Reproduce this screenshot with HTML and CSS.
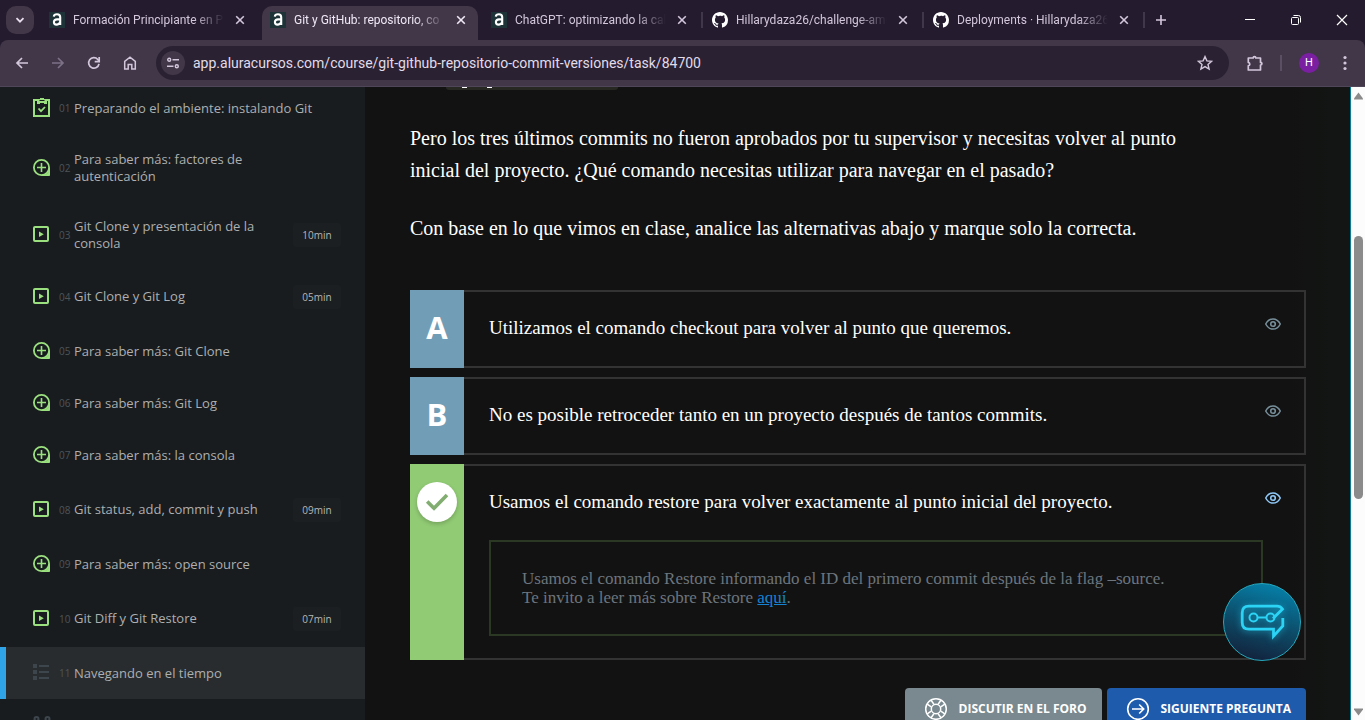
FILE: index.html
```html
<!DOCTYPE html>
<html lang="es">
<head>
<meta charset="utf-8">
<title>Git y GitHub: repositorio, commit y versiones</title>
<link rel="stylesheet" href="styles.css">
</head>
<body>
<svg class="sprite" aria-hidden="true">
  <symbol id="alura" viewBox="0 0 16 16"><rect width="16" height="16" fill="#1d3338"/><path d="M4.800 4.600C5 2.900 6.400 2.200 8 2.200c2 0 3.200 1 3.200 3V13M11 7.400H8C6 7.400 4.900 8.500 4.900 10s1 2.600 2.600 2.600S11 11.500 11 9.800" fill="none" stroke="#fff" stroke-width="2.100"/></symbol>
  <symbol id="github" viewBox="0 0 16 16"><path fill="#fff" d="M8 0C3.580 0 0 3.580 0 8c0 3.540 2.290 6.530 5.470 7.590.4.070.55-.17.55-.38 0-.19-.01-.82-.01-1.490-2.010.37-2.530-.49-2.690-.94-.09-.23-.48-.94-.82-1.130-.28-.15-.68-.52-.01-.53.63-.01 1.080.58 1.230.82.72 1.210 1.870.87 2.330.66.070-.52.28-.87.51-1.070-1.780-.2-3.640-.89-3.640-3.950 0-.87.31-1.590.82-2.150-.08-.2-.36-1.020.08-2.120 0 0 .67-.21 2.200.82A7.600 7.600 0 0 1 8 3.860c.68 0 1.360.09 2 .27 1.530-1.040 2.200-.82 2.200-.82.44 1.100.16 1.920.08 2.120.51.56.82 1.270.82 2.150 0 3.070-1.870 3.750-3.650 3.950.29.25.54.73.54 1.480 0 1.070-.01 1.930-.01 2.200 0 .21.15.46.55.38A8 8 0 0 0 16 8c0-4.420-3.580-8-8-8z"/></symbol>
  <symbol id="x" viewBox="0 0 10 10"><path d="M1.200 1.200l7.600 7.600M8.800 1.200L1.200 8.800" stroke="currentColor" stroke-width="1.600" fill="none"/></symbol>
  <symbol id="clip" viewBox="0 0 18 20"><path d="M1 2h15v16H1z" fill="none" stroke="currentColor" stroke-width="2"/><path d="M4 1h3V0h4v1h3v5h-3V5H7v1H4z" fill="currentColor"/><path d="M6.500 2.500h5" stroke="#181c1f"/><path d="M5.500 10.500l2.500 2.700 4-4.200" fill="none" stroke="currentColor" stroke-width="1.800"/></symbol>
  <symbol id="plus" viewBox="0 0 18 18"><circle cx="8.500" cy="8.500" r="7.600" fill="none" stroke="currentColor" stroke-width="1.800"/><path d="M8.500 4v9M4 8.500h9" stroke="currentColor" stroke-width="1.600"/><path d="M16.500 9v7.500H9c4.500 0 7.500-3.500 7.500-7.500z" fill="currentColor" stroke="currentColor"/></symbol>
  <symbol id="play" viewBox="0 0 18 18"><rect x="1" y="1" width="14" height="14" rx="1" fill="none" stroke="currentColor" stroke-width="2"/><path d="M6 5.500v5.500l4.800-2.700z" fill="currentColor"/></symbol>
  <symbol id="list" viewBox="0 0 18 18"><path d="M0 0h4v4H0zM0 6h4v4H0zM0 12h4v4H0zM6 1h10v2H6zM6 7h10v2H6zM6 13h10v2H6z" fill="currentColor"/></symbol>
  <symbol id="branch" viewBox="0 0 18 18"><path d="M3.500 5v5c0 3 11 3 11 0V5M9 12v5" fill="none" stroke="currentColor" stroke-width="2"/><circle cx="3.500" cy="3" r="2" fill="none" stroke="currentColor" stroke-width="2"/><circle cx="14.500" cy="3" r="2" fill="none" stroke="currentColor" stroke-width="2"/></symbol>
  <symbol id="eye" viewBox="0 0 16 12"><path d="M.7 6C2.500 2.500 5 .9 8 .9S13.500 2.500 15.300 6C13.500 9.500 11 11.100 8 11.100S2.500 9.500.7 6z" fill="none" stroke="currentColor" stroke-width="1.500"/><circle cx="8" cy="6" r="2.300" fill="none" stroke="currentColor" stroke-width="1.600"/></symbol>
</svg>

<header class="browser">
  <div class="tabstrip">
    <button class="tab-search" aria-label="Buscar pestañas"><svg width="10" height="10" viewBox="0 0 10 10"><path d="M1.500 3.200L5 6.700l3.500-3.500" fill="none" stroke="currentColor" stroke-width="1.800"/></svg></button>
    <nav class="tabs" aria-label="Pestañas">
      <div class="tab"><svg class="favicon"><use href="#alura"/></svg><span class="tab-title">Formación Principiante en P</span><button class="tab-close" aria-label="Cerrar"><svg><use href="#x"/></svg></button></div>
      <div class="tab active"><svg class="favicon"><use href="#alura"/></svg><span class="tab-title">Git y GitHub: repositorio, co</span><button class="tab-close" aria-label="Cerrar"><svg><use href="#x"/></svg></button></div>
      <div class="tab divided"><svg class="favicon"><use href="#alura"/></svg><span class="tab-title">ChatGPT: optimizando la cali</span><button class="tab-close" aria-label="Cerrar"><svg><use href="#x"/></svg></button></div>
      <div class="tab divided"><svg class="favicon"><use href="#github"/></svg><span class="tab-title">Hillarydaza26/challenge-ami</span><button class="tab-close" aria-label="Cerrar"><svg><use href="#x"/></svg></button></div>
      <div class="tab divided"><svg class="favicon"><use href="#github"/></svg><span class="tab-title">Deployments · Hillarydaza26</span><button class="tab-close" aria-label="Cerrar"><svg><use href="#x"/></svg></button></div>
    </nav>
    <button class="new-tab" aria-label="Nueva pestaña"><svg width="12" height="12" viewBox="0 0 12 12"><path d="M6 1v10M1 6h10" stroke="currentColor" stroke-width="1.600"/></svg></button>
    <div class="window-controls">
      <button aria-label="Minimizar"><svg width="12" height="12" viewBox="0 0 12 12"><path d="M1 5.500h10" stroke="currentColor"/></svg></button>
      <button aria-label="Restaurar"><svg width="12" height="12" viewBox="0 0 12 12"><rect x="1.500" y="3.500" width="7" height="7" rx="1" fill="none" stroke="currentColor"/><path d="M3.500 1.500h5a2 2 0 0 1 2 2v5" fill="none" stroke="currentColor"/></svg></button>
      <button aria-label="Cerrar ventana"><svg width="12" height="12" viewBox="0 0 12 12"><path d="M1 1l10 10M11 1L1 11" stroke="currentColor" stroke-width="1.200"/></svg></button>
    </div>
  </div>
  <div class="toolbar">
    <div class="nav-buttons">
      <button aria-label="Atrás"><svg viewBox="0 0 16 16"><path d="M14 8H3M8 3L3 8l5 5" fill="none" stroke="currentColor" stroke-width="1.700"/></svg></button>
      <button class="disabled" aria-label="Adelante" disabled><svg viewBox="0 0 16 16"><path d="M2 8h11M8 3l5 5-5 5" fill="none" stroke="currentColor" stroke-width="1.700"/></svg></button>
      <button aria-label="Recargar"><svg viewBox="0 0 16 16"><path d="M13 8.800A5.200 5.200 0 1 1 11.800 4.500L13 6" fill="none" stroke="currentColor" stroke-width="1.700"/><path d="M13.200 2v4.600H8.700" fill="none" stroke="currentColor" stroke-width="1.700"/></svg></button>
      <button aria-label="Inicio"><svg viewBox="0 0 16 16"><path d="M2.700 14V6.300L8 2.200l5.300 4.100V14H9.800V9.400H6.200V14z" fill="none" stroke="currentColor" stroke-width="1.500"/></svg></button>
    </div>
    <div class="address">
      <button class="site-info" aria-label="Información del sitio"><svg width="12" height="12" viewBox="0 0 12 12"><g fill="none" stroke="currentColor" stroke-width="1.400"><circle cx="2.200" cy="2.700" r="1.500"/><path d="M5.500 2.700H12M0 9.300h6.500"/><circle cx="9.800" cy="9.300" r="1.500"/></g></svg></button>
      <label class="hidden" for="url">Dirección</label>
      <input id="url" class="url" type="text" value="app.aluracursos.com/course/git-github-repositorio-commit-versiones/task/84700">
      <button class="star" aria-label="Marcador"><svg width="16" height="16" viewBox="0 0 16 16"><path d="M8 1.600l1.900 4.300 4.700.4-3.600 3.100 1.100 4.600L8 11.600 3.900 14 5 9.400 1.400 6.300l4.700-.4z" fill="none" stroke="currentColor" stroke-width="1.400"/></svg></button>
    </div>
    <div class="toolbar-end">
      <button aria-label="Extensiones"><svg width="17" height="17" viewBox="0 0 17 17"><path d="M1.300 3h4.900c0-1.900 2.600-1.900 2.600 0h4.700v4.400c1.900 0 1.900 2.600 0 2.600v5H1.300v-4.200c2-.5 2-2.800 0-3.400z" fill="none" stroke="currentColor" stroke-width="1.700" stroke-linejoin="round"/></svg></button>
      <span class="divider"></span>
      <button class="avatar" aria-label="Perfil">H</button>
      <button aria-label="Menú"><svg width="4" height="16" viewBox="0 0 4 16"><g fill="currentColor"><circle cx="2" cy="2.500" r="1.600"/><circle cx="2" cy="8" r="1.600"/><circle cx="2" cy="13.500" r="1.600"/></g></svg></button>
    </div>
  </div>
</header>

<div class="page">
  <aside class="sidebar">
    <ol class="tasks">
      <li><a class="task done" href="#"><svg class="clip"><use href="#clip"/></svg><span class="num">01</span><span class="name">Preparando el ambiente: instalando Git</span></a></li>
      <li><a class="task done tall" href="#"><svg><use href="#plus"/></svg><span class="num">02</span><span class="name">Para saber más: factores de autenticación</span></a></li>
      <li><a class="task done tall" href="#"><svg><use href="#play"/></svg><span class="num">03</span><span class="name">Git Clone y presentación de la consola</span><span class="time">10min</span></a></li>
      <li><a class="task done timed" href="#"><svg><use href="#play"/></svg><span class="num">04</span><span class="name">Git Clone y Git Log</span><span class="time">05min</span></a></li>
      <li><a class="task done" href="#"><svg><use href="#plus"/></svg><span class="num">05</span><span class="name">Para saber más: Git Clone</span></a></li>
      <li><a class="task done" href="#"><svg><use href="#plus"/></svg><span class="num">06</span><span class="name">Para saber más: Git Log</span></a></li>
      <li><a class="task done" href="#"><svg><use href="#plus"/></svg><span class="num">07</span><span class="name">Para saber más: la consola</span></a></li>
      <li><a class="task done timed" href="#"><svg><use href="#play"/></svg><span class="num">08</span><span class="name">Git status, add, commit y push</span><span class="time">09min</span></a></li>
      <li><a class="task done" href="#"><svg><use href="#plus"/></svg><span class="num">09</span><span class="name">Para saber más: open source</span></a></li>
      <li><a class="task done timed" href="#"><svg><use href="#play"/></svg><span class="num">10</span><span class="name">Git Diff y Git Restore</span><span class="time">07min</span></a></li>
      <li><a class="task current" href="#"><svg><use href="#list"/></svg><span class="num">11</span><span class="name">Navegando en el tiempo</span></a></li>
      <li><a class="task" href="#"><svg><use href="#branch"/></svg></a></li>
    </ol>
  </aside>

  <main class="content">
    <div class="code-end"><i></i><i></i></div>
    <div class="statement">
      <p>Pero los tres últimos commits no fueron aprobados por tu supervisor y necesitas volver al punto<br>inicial del proyecto. ¿Qué comando necesitas utilizar para navegar en el pasado?</p>
      <p>Con base en lo que vimos en clase, analice las alternativas abajo y marque solo la correcta.</p>
    </div>
    <div class="options">
      <div class="option">
        <input class="hidden" type="radio" name="answer" id="a"><label class="letter" for="a">A</label>
        <div class="option-body"><label class="option-text" for="a">Utilizamos el comando checkout para volver al punto que queremos.</label></div>
        <button class="eye" aria-label="Ver opinión"><svg><use href="#eye"/></svg></button>
      </div>
      <div class="option">
        <input class="hidden" type="radio" name="answer" id="b"><label class="letter" for="b">B</label>
        <div class="option-body"><label class="option-text" for="b">No es posible retroceder tanto en un proyecto después de tantos commits.</label></div>
        <button class="eye" aria-label="Ver opinión"><svg><use href="#eye"/></svg></button>
      </div>
      <div class="option">
        <input class="hidden" type="radio" name="answer" id="c" checked><label class="letter correct" for="c" aria-label="C"><span class="check"><svg width="24" height="24" viewBox="0 0 24 24"><path d="M2.200 11.500l6.800 6.800L22 5" fill="none" stroke="#82ad70" stroke-width="3.600"/></svg></span></label>
        <div class="option-body">
          <label class="option-text" for="c">Usamos el comando restore para volver exactamente al punto inicial del proyecto.</label>
          <p class="opinion">Usamos el comando Restore informando el ID del primero commit después de la flag –source.<br>Te invito a leer más sobre Restore <a href="#">aquí</a>.</p>
        </div>
        <button class="eye open" aria-label="Ocultar opinión"><svg><use href="#eye"/></svg></button>
      </div>
    </div>
    <div class="actions">
      <button class="action forum"><svg viewBox="0 0 24 24"><g fill="none" stroke="currentColor" stroke-width="1.500"><circle cx="12" cy="12" r="10.300"/><circle cx="12" cy="12" r="4.700"/><path d="M7.200 9.900L3.200 7.100M9.900 7.200L7.100 3.200M14.100 7.200l2.800-4M16.800 9.900l4-2.800M16.800 14.100l4 2.800M14.100 16.800l2.800 4M9.900 16.800l-2.800 4M7.200 14.100l-4 2.800"/></g></svg>DISCUTIR EN EL FORO</button>
      <button class="action next"><svg viewBox="0 0 24 24"><g fill="none" stroke="currentColor" stroke-width="1.600"><circle cx="12" cy="12" r="10.300"/><path d="M6 12h11.500M13.200 7.500l4.500 4.500-4.500 4.500"/></g></svg>SIGUIENTE PREGUNTA</button>
    </div>
    <button class="chat" aria-label="Asistente"><svg width="46" height="36" viewBox="0 0 46 36"><g fill="none" stroke="#2bd3f5" stroke-width="2.800"><path d="M34 14.500l9.500-9.500c-1.500-2-3-2.800-5.500-2.800H10C5.500 2.200 3.200 4.500 3.200 9v9.500c0 4.500 2.300 6.700 6.800 6.700h24.500v7l9.300-10.200v-8"/><circle cx="14.500" cy="13.500" r="4" stroke-width="2"/><circle cx="31.500" cy="13.500" r="4" stroke-width="2"/><path d="M18.500 13.500h9" stroke-width="2"/></g></svg></button>
  </main>

  <div class="scrollbar" aria-hidden="true">
    <svg viewBox="0 0 9 8"><path d="M4.500.5L9 6.500v1H0v-1z" fill="#8b8b8b"/></svg>
    <span class="thumb"></span>
    <svg viewBox="0 0 9 8"><path d="M0 .5h9v1l-4.500 6L0 1.500z" fill="#8b8b8b"/></svg>
  </div>
</div>
</body>
</html>
```
FILE: styles.css
```css
* { box-sizing: border-box; }
body {
  margin: 0;
  height: 100vh;
  display: flex;
  flex-direction: column;
  overflow: hidden;
  background: #121212;
  color: #fff;
  font-family: "Open Sans", sans-serif;
}
button {
  border: 0;
  padding: 0;
  background: none;
  color: inherit;
  font-family: inherit;
  display: flex;
  align-items: center;
  justify-content: center;
}
.sprite { display: none; }
.hidden {
  position: absolute;
  width: 1px;
  height: 1px;
  margin: 0;
  opacity: 0;
  overflow: hidden;
}

/* Browser chrome */
.browser { position: relative; z-index: 0; flex: none; background: #241b2e; }
.tabstrip { display: flex; align-items: center; height: 40px; padding-left: 6px; color: #d3c7dc; }
.tab-search { width: 28px; height: 28px; border-radius: 10px; background: #413749; color: #e8def0; }
.tabs { display: flex; align-self: stretch; padding: 6px 0 0 7px; }
.tab {
  position: relative;
  display: flex;
  align-items: center;
  width: 221px;
  height: 34px;
  padding: 0 17px 6px 8px;
}
.favicon { width: 16px; height: 16px; margin-right: 8px; }
.tab-title {
  flex: 1;
  overflow: hidden;
  white-space: nowrap;
  font: 12px/18px Roboto, sans-serif;
  -webkit-mask-image: linear-gradient(90deg, #000 80%, transparent);
  mask-image: linear-gradient(90deg, #000 80%, transparent);
}
.tab-close { width: 10px; height: 10px; margin-left: 11px; }
.tab-close svg { width: 10px; height: 10px; }
.tab.active { color: #f0e8f5; }
.tab.active::before {
  content: "";
  position: absolute;
  z-index: -1;
  inset: 0 5px 0 0;
  border-radius: 10px 10px 0 0;
  background: #413749;
}
.tab.divided::after {
  content: "";
  position: absolute;
  right: 1px;
  top: 6px;
  width: 2px;
  height: 16px;
  background: #41374b;
}
.new-tab { width: 30px; height: 28px; }
.window-controls { display: flex; margin-left: auto; color: #fff; }
.window-controls button { width: 46px; height: 40px; }
.toolbar {
  display: flex;
  align-items: center;
  height: 47px;
  padding: 0 18px 0 14px;
  background: #413749;
  border-bottom: 1px solid #50465a;
  border-radius: 8px 8px 0 0;
  color: #d3c7dc;
}
.nav-buttons { display: flex; gap: 20px; margin-right: 18px; }
.nav-buttons svg { width: 16px; height: 16px; }
.disabled { color: #7c7186; }
.address {
  flex: 1;
  display: flex;
  align-items: center;
  height: 34px;
  padding: 0 16px 0 5px;
  border-radius: 17px;
  background: #2a2233;
}
.site-info { width: 24px; height: 24px; border-radius: 50%; background: #413749; }
.url {
  flex: 1;
  height: 20px;
  margin-left: 8px;
  padding: 0;
  border: 0;
  background: none;
  color: #e2dbe8;
  font: 14px/20px Roboto, sans-serif;
}
.toolbar-end { display: flex; align-items: center; margin-left: 18px; }
.divider { width: 2px; height: 16px; margin: 0 17px 0 16px; background: #5a4f63; }
.avatar {
  width: 20px;
  height: 20px;
  margin-right: 24px;
  border-radius: 50%;
  background: #7b1fa2;
  color: #fff;
  font: 11px/20px Roboto, sans-serif;
}

/* Course page */
.page { flex: 1; min-height: 0; display: flex; }
.sidebar { flex: none; width: 365px; overflow: hidden; background: #181c1f; }
.tasks { list-style: none; margin: -5px 0 0; padding: 0; }
.task {
  display: flex;
  align-items: center;
  height: 52px;
  padding: 0 24px 0 33px;
  color: #3d464d;
  text-decoration: none;
}
.tall { height: 67px; }
.timed { height: 57px; }
.task svg { flex: none; width: 18px; height: 18px; }
.task svg.clip { height: 20px; }
.done svg { color: #9be07f; }
.num { flex: none; width: 24px; padding-left: 8px; margin-right: -1px; font-size: 10px; line-height: 16px; color: #4f5457; }
.name { flex: 1; max-width: 240px; font-size: 13px; line-height: 17px; color: #adafb0; }
.tall .name { max-width: 190px; }
.time {
  margin-left: auto;
  width: 48px;
  border-radius: 3px;
  background: #1b1f22;
  color: #b5b7b8;
  font-size: 10px;
  line-height: 24px;
  text-align: center;
}
.current { padding-left: 27px; border-left: 6px solid #2fa4e7; background: #282c2f; }

.content {
  flex: 1;
  min-width: 0;
  position: relative;
  overflow: hidden;
  padding: 0 44px 0 45px;
  background: linear-gradient(90deg, transparent 94%, #121513 98%);
  font-family: "Liberation Serif", serif;
}
.code-end {
  display: flex;
  gap: 20px;
  width: 172px;
  height: 3px;
  margin-left: 36px;
  padding-left: 16px;
  border-radius: 0 0 4px 4px;
  background: #272822;
}
.code-end i { width: 5px; height: 1px; background: #fff; }
.statement { padding: 32px 0 46px; }
.statement p { margin: 0; font-size: 20px; line-height: 32px; }
.statement p + p { margin-top: 26px; }
.options { display: grid; gap: 9px; }
.option {
  position: relative;
  display: flex;
  min-height: 78px;
}
.letter {
  flex: none;
  width: 54px;
  background: #719eb6;
  font: bold 31px/74px "Open Sans", sans-serif;
  text-align: center;
}
.correct { display: flex; justify-content: center; align-items: flex-start; padding-top: 18px; background: #91cb74; }
.check {
  display: flex;
  align-items: center;
  justify-content: center;
  width: 40px;
  height: 40px;
  border-radius: 50%;
  background: #fff;
  box-shadow: 0 2px 4px #0003;
}
.option-body {
  flex: 1;
  min-width: 0;
  padding: 20px 41px 22px 25px;
  border: 2px solid #333;
  border-left: 0;
}
.option-text { display: block; font-size: 19px; line-height: 32px; }
.eye { position: absolute; top: 28px; right: 25px; color: #78909c; }
.eye svg { width: 16px; height: 12px; }
.eye.open { color: #90caf9; }
.opinion {
  margin: 22px 0 0;
  padding: 27px 31px 27px;
  border: 2px solid #2b3824;
  color: #6c757d;
  font-size: 17px;
  line-height: 19px;
}
.opinion a { color: #1583d2; }
.actions { display: flex; justify-content: flex-end; gap: 5px; margin-top: 28px; }
.action {
  height: 42px;
  padding: 0 15px 0 19px;
  border-radius: 4px;
  font: bold 12px/18px "Open Sans", sans-serif;
  white-space: nowrap;
}
.action svg { width: 24px; height: 24px; margin-right: 11px; }
.forum { background: #7a898f; }
.next { background: #1f5bac; }
.chat {
  position: absolute;
  right: 49px;
  bottom: 59px;
  width: 78px;
  height: 78px;
  border: 1px solid #25a8bd;
  border-radius: 50%;
  background: linear-gradient(195deg, #067da5 10%, #0d4965 55%, #13203a 95%);
}
.chat svg { filter: drop-shadow(0 1px 3px #2bd3f588); }

.scrollbar {
  flex: none;
  display: flex;
  flex-direction: column;
  align-items: center;
  width: 15px;
  padding: 5px 0 4px;
  border-left: 1px solid #087b95;
  background: #fcfcfc;
}
.scrollbar svg { width: 9px; height: 8px; }
.thumb { width: 9px; height: 263px; margin: 136px 0 auto; border-radius: 5px; background: #8b8b8b; }
```
